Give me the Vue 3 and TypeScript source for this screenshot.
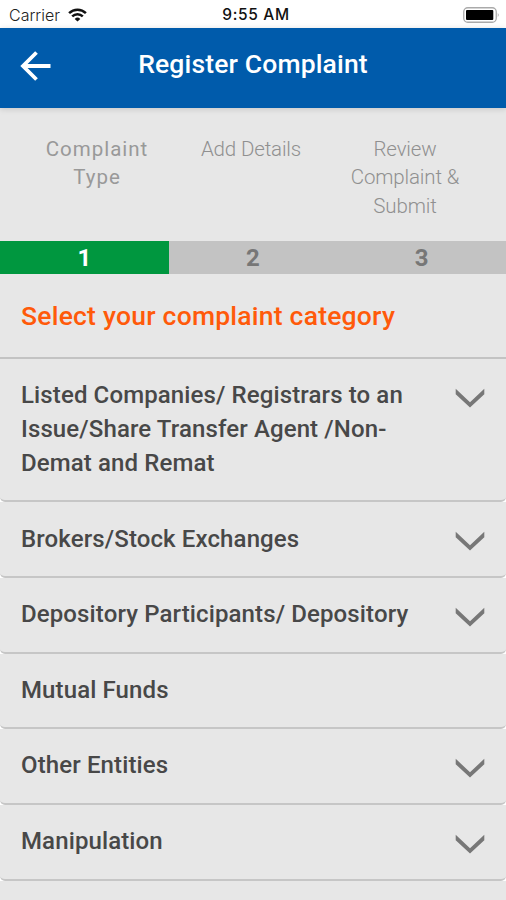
<script setup lang="ts">
interface Step {
  id: number
  lines: string[]
  active: boolean
}

interface Category {
  lines: string[]
  expandable: boolean
}

const steps: Step[] = [
  { id: 1, lines: ['Complaint', 'Type'], active: true },
  { id: 2, lines: ['Add Details'], active: false },
  { id: 3, lines: ['Review', 'Complaint &', 'Submit'], active: false },
]

const categories: Category[] = [
  {
    lines: ['Listed Companies/ Registrars to an', 'Issue/Share Transfer Agent /Non-', 'Demat and Remat'],
    expandable: true,
  },
  { lines: ['Brokers/Stock Exchanges'], expandable: true },
  { lines: ['Depository Participants/ Depository'], expandable: true },
  { lines: ['Mutual Funds'], expandable: false },
  { lines: ['Other Entities'], expandable: true },
  { lines: ['Manipulation'], expandable: true },
]
</script>

<template>
  <div class="screen">
    <div class="status">
      <div class="carrier">
        <span>Carrier</span>
        <svg class="wifi" viewBox="0 0 19 14" width="19" height="14">
          <path d="M1.1 5.1a12 12 0 0 1 16.8 0" />
          <path d="M4.2 8.3a7.6 7.6 0 0 1 10.6 0" />
          <path class="dot" d="M9.5 13.6 6.7 10.9a4 4 0 0 1 5.6 0z" />
        </svg>
      </div>
      <span class="clock">9:55 AM</span>
      <svg class="battery" viewBox="0 0 37 16" width="37" height="16">
        <rect class="shell" x="0.75" y="0.75" width="32.5" height="14.5" rx="4" />
        <rect x="3" y="3" width="27.3" height="10" rx="1" />
        <path class="cap" d="M34.8 5.8q1.8 2.2 0 4.4z" />
      </svg>
    </div>

    <header class="bar">
      <svg class="back" viewBox="0 0 32 30" width="32" height="30">
        <path d="M30.5 15H3M16.5 1.5 3 15l13.5 13.5" />
      </svg>
      <h1>Register Complaint</h1>
    </header>

    <div class="labels">
      <div v-for="step in steps" :key="step.id" class="label" :class="{ active: step.active }">
        <span v-for="line in step.lines" :key="line">{{ line }}</span>
      </div>
    </div>

    <div class="progress">
      <div v-for="step in steps" :key="step.id" class="segment" :class="{ active: step.active }">
        {{ step.id }}
      </div>
    </div>

    <h2>Select your complaint category</h2>

    <ul class="list">
      <li v-for="category in categories" :key="category.lines[0]" class="row">
        <div class="name">
          <span v-for="line in category.lines" :key="line">{{ line }}</span>
        </div>
        <svg v-if="category.expandable" class="chevron" viewBox="0 0 30 20" width="30" height="20">
          <path d="M0.7 0.8 15 14.2 29.3 0.8V6.2L15 19.6 0.7 6.2z" />
        </svg>
      </li>
    </ul>
    <div class="rest"></div>
  </div>
</template>

<style>
body {
  margin: 0;
  background: #fff;
}
</style>

<style scoped>
.screen {
  width: 506px;
  height: 900px;
  overflow: hidden;
  display: flex;
  flex-direction: column;
  font-family: Roboto, sans-serif;
  background: #fff;
}

.status {
  flex: none;
  height: 28px;
  box-sizing: border-box;
  padding: 0 6px 0 9px;
  display: grid;
  grid-template-columns: 1fr auto 1fr;
  align-items: center;
  color: #111;
}

.carrier {
  display: flex;
  align-items: center;
  gap: 8px;
  font: 300 16px/28px Inter, sans-serif;
  color: #222;
}

.wifi {
  fill: none;
  stroke: #111;
  stroke-width: 2.5;
}

.wifi .dot {
  fill: #111;
  stroke: none;
}

.clock {
  padding-left: 3px;
  font: 500 15.5px/29px Inter, sans-serif;
  letter-spacing: 0.65px;
}

.battery {
  justify-self: end;
  fill: #000;
}

.battery .shell {
  fill: #fff;
  stroke: #aaa;
  stroke-width: 1.3;
}

.battery .cap {
  fill: #999;
}

.bar {
  flex: none;
  height: 80px;
  box-sizing: border-box;
  padding: 0 20px;
  display: grid;
  grid-template-columns: 32px 1fr 32px;
  background: #005bab;
  box-shadow: 0 1px 6px rgba(0, 0, 0, 0.15);
  z-index: 1;
}

.back {
  margin-top: 23px;
  fill: none;
  stroke: #fff;
  stroke-width: 3.8;
}

h1 {
  margin: 0;
  font-size: 26.5px;
  font-weight: 500;
  line-height: 72px;
  letter-spacing: 0.15px;
  text-align: center;
  color: #fff;
}

.labels {
  flex: none;
  height: 133px;
  box-sizing: border-box;
  padding: 26.5px 24px 0 20px;
  display: grid;
  grid-template-columns: repeat(3, 1fr);
  background: #e7e7e7;
}

.label {
  display: flex;
  flex-direction: column;
  align-items: center;
  font-size: 20.5px;
  font-weight: 300;
  line-height: 28.5px;
  letter-spacing: -0.15px;
  color: #909090;
}

.label.active {
  font-weight: 400;
  letter-spacing: 1px;
  color: #999;
}

.progress {
  flex: none;
  height: 33px;
  display: grid;
  grid-template-columns: repeat(3, 1fr);
  background: #c3c3c3;
}

.segment {
  font: 700 24px/35px Roboto, sans-serif;
  text-align: center;
  color: #777;
}

.segment.active {
  color: #fff;
  background: #00973f;
}

h2 {
  flex: none;
  margin: 0;
  height: 83px;
  box-sizing: border-box;
  padding: 0 21px;
  font-size: 26.5px;
  font-weight: 500;
  line-height: 84px;
  letter-spacing: 0.22px;
  color: #ff5a0a;
  background: #e7e7e7;
}

.list {
  flex: none;
  margin: 0;
  padding: 0;
  list-style: none;
  border-top: 2px solid #c3c3c3;
}

.row {
  display: flex;
  justify-content: space-between;
  align-items: flex-start;
  box-sizing: border-box;
  padding: 20.1px 21px 19.65px;
  border-bottom: 2px solid #c6c6c6;
  border-radius: 0 0 5px 5px;
  background: #e7e7e7;
}

.name {
  display: flex;
  flex-direction: column;
  font-size: 24px;
  font-weight: 500;
  line-height: 33.9px;
  letter-spacing: 0.12px;
  white-space: nowrap;
  color: #484848;
}

.chevron {
  flex: none;
  margin-top: 8.6px;
  fill: #777;
}

.rest {
  flex: 1;
  background: #e7e7e7;
}
</style>
